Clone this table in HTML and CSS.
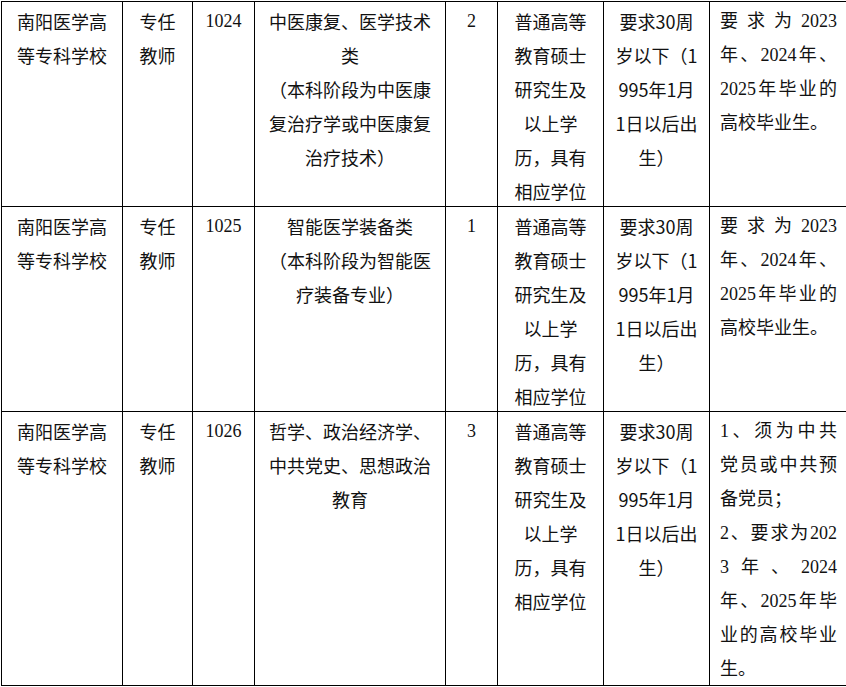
FILE: index.html
```html
<!DOCTYPE html>
<html lang="zh-CN">
<head>
<meta charset="utf-8">
<title>岗位表</title>
<link rel="stylesheet" href="styles.css">
</head>
<body>
<div class="table">
  <div class="cell cjk">南阳医学高<br>等专科学校</div>
  <div class="cell cjk">专任<br>教师</div>
  <div class="cell serif">1024</div>
  <div class="cell cjk">中医康复、医学技术<br>类<br>（本科阶段为中医康<br>复治疗学或中医康复<br>治疗技术）</div>
  <div class="cell serif">2</div>
  <div class="cell cjk">普通高等<br>教育硕士<br>研究生及<br>以上学<br>历，具有<br>相应学位</div>
  <div class="cell cjk">要求30周<br>岁以下（1<br>995年1月<br>1日以后出<br>生）</div>
  <div class="cell serif note">
    <span class="jl">要求为2023</span>
    <span class="jl">年、2024年、</span>
    <span class="jl">2025年毕业的</span>
    <span class="ll">高校毕业生。</span>
  </div>

  <div class="cell cjk">南阳医学高<br>等专科学校</div>
  <div class="cell cjk">专任<br>教师</div>
  <div class="cell serif">1025</div>
  <div class="cell cjk">智能医学装备类<br>（本科阶段为智能医<br>疗装备专业）</div>
  <div class="cell serif">1</div>
  <div class="cell cjk">普通高等<br>教育硕士<br>研究生及<br>以上学<br>历，具有<br>相应学位</div>
  <div class="cell cjk">要求30周<br>岁以下（1<br>995年1月<br>1日以后出<br>生）</div>
  <div class="cell serif note">
    <span class="jl">要求为2023</span>
    <span class="jl">年、2024年、</span>
    <span class="jl">2025年毕业的</span>
    <span class="ll">高校毕业生。</span>
  </div>

  <div class="cell cjk">南阳医学高<br>等专科学校</div>
  <div class="cell cjk">专任<br>教师</div>
  <div class="cell serif">1026</div>
  <div class="cell cjk">哲学、政治经济学、<br>中共党史、思想政治<br>教育</div>
  <div class="cell serif">3</div>
  <div class="cell cjk">普通高等<br>教育硕士<br>研究生及<br>以上学<br>历，具有<br>相应学位</div>
  <div class="cell cjk">要求30周<br>岁以下（1<br>995年1月<br>1日以后出<br>生）</div>
  <div class="cell serif note">
    <span class="jl">1、须为中共</span>
    <span class="jl">党员或中共预</span>
    <span class="ll">备党员；</span>
    <span class="jl">2、要求为202</span>
    <span class="jl">3年、2024</span>
    <span class="jl">年、2025年毕</span>
    <span class="jl">业的高校毕业</span>
    <span class="ll">生。</span>
  </div>
</div>
</body>
</html>
```
FILE: styles.css
```css
html, body {
  margin: 0;
  padding: 0;
  background: #ffffff;
  overflow: hidden;
}

.table {
  display: grid;
  grid-template-columns: 121px 70px 62px 191px 52px 106px 106px 138px;
  grid-template-rows: 205px 205px 274px;
  width: max-content;
  margin: 1px 0 0 1px;
  border-left: 1px solid #000;
  border-top: 1px solid #000;
  color: #111;
  font-size: 18px;
  line-height: 34px;
}

.cell {
  border-right: 1px solid #000;
  border-bottom: 1px solid #000;
  padding: 2px 4px 0;
  text-align: center;
  white-space: nowrap;
  overflow: visible;
}

.cjk {
  font-family: "Noto Sans CJK SC", sans-serif;
}

.serif {
  font-family: "Liberation Serif", "Noto Sans CJK SC", serif;
}

.note {
  padding: 2px 10px 0 10px;
  text-align: left;
}

.jl {
  display: block;
  text-align: justify;
  text-align-last: justify;
}

.ll {
  display: block;
  text-align: left;
}
```
